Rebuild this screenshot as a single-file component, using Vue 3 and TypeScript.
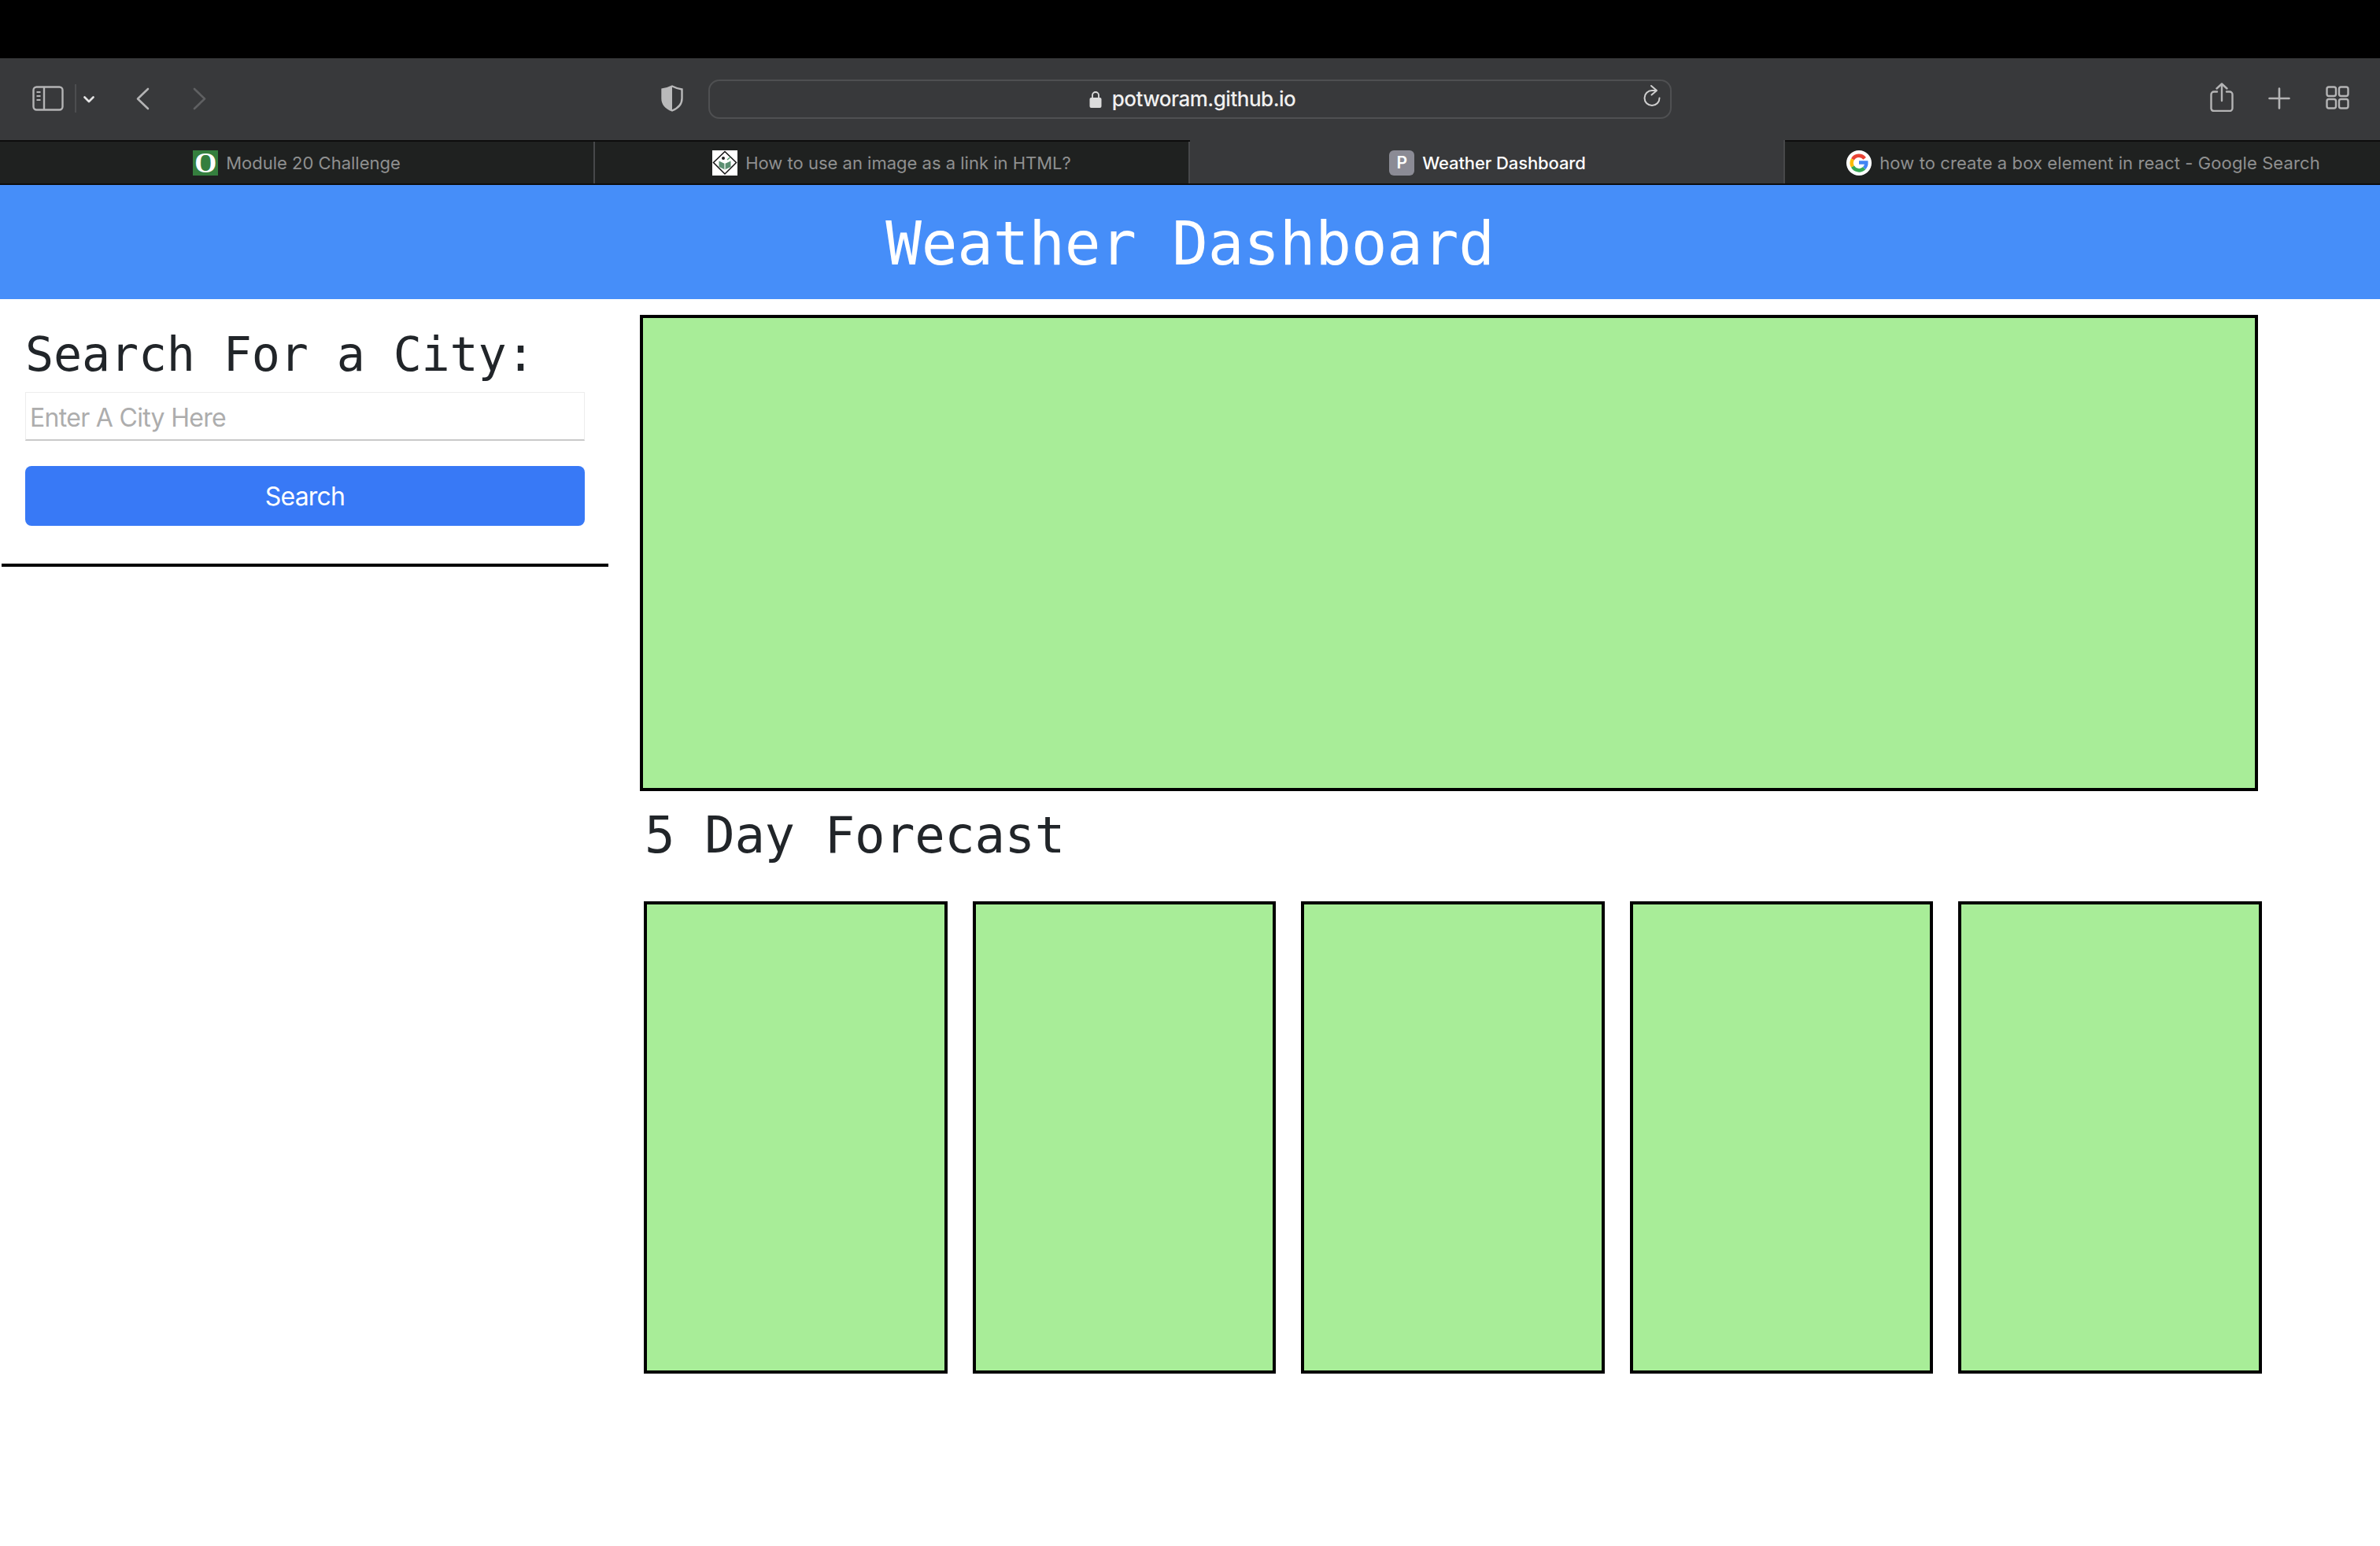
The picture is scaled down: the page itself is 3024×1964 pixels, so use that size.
<script setup lang="ts">
const forecastDays = [1, 2, 3, 4, 5]
</script>

<template>
  <div class="page">
    <div class="menu-strip"></div>

    <div class="toolbar">
      <svg class="ico-sidebar" width="40" height="32" viewBox="0 0 40 32" fill="none" stroke="#b4b4b5" stroke-width="2.4">
        <rect x="1.5" y="1.5" width="37" height="29" rx="4" />
        <path d="M15 2v28" />
        <path d="M5.5 8h5M5.5 13h5M5.5 18h5" stroke-width="2" />
      </svg>
      <span class="ico-sep"></span>
      <svg class="ico-chevron" width="14" height="9" viewBox="0 0 14 9" fill="none" stroke="#e4e4e4" stroke-width="2.6" stroke-linecap="round" stroke-linejoin="round">
        <path d="M1.5 1.5 7 7l5.5-5.5" />
      </svg>
      <svg class="ico-back" width="17" height="29" viewBox="0 0 17 29" fill="none" stroke="#b4b4b5" stroke-width="2.6" stroke-linecap="round" stroke-linejoin="round">
        <path d="M15 2 2 14.5 15 27" />
      </svg>
      <svg class="ico-forward" width="17" height="29" viewBox="0 0 17 29" fill="none" stroke="#5f6062" stroke-width="2.6" stroke-linecap="round" stroke-linejoin="round">
        <path d="M2 2l13 12.5L2 27" />
      </svg>
      <svg class="ico-shield" width="28" height="34" viewBox="0 0 28 34" fill="none">
        <path d="M14 1.500C18 3.500 22 5 26.500 5.500V17c0 7-5 12.500-12.500 15.500C6.500 29.500 1.500 24 1.500 17V5.500C6 5 10 3.500 14 1.500Z" stroke="#b9b9ba" stroke-width="2.400" />
        <path d="M14 1.500C10 3.500 6 5 1.500 5.500V17c0 7 5 12.500 12.500 15.500Z" fill="#b9b9ba" />
      </svg>

      <div class="url-bar">
        <span class="url-text-wrap">
          <svg width="16" height="22" viewBox="0 0 16 22" fill="none">
            <path d="M4 10V6a4 4 0 0 1 8 0v4" stroke="#dcdcdc" stroke-width="1.800" />
            <rect x="0.500" y="9" width="15" height="13" rx="2" fill="#dcdcdc" />
          </svg>
          <span class="url-text">potworam.github.io</span>
        </span>
        <svg class="ico-reload" width="24" height="28" viewBox="0 0 24 28" fill="none" stroke="#d0d0d0" stroke-width="2" stroke-linecap="round" stroke-linejoin="round">
          <path d="M17 8h-5a9.500 9.500 0 1 0 9.500 9.500" />
          <path d="M11 2l7 6-6.500 5.500" />
        </svg>
      </div>

      <svg class="ico-share" width="30" height="37" viewBox="0 0 30 37" fill="none" stroke="#b4b4b5" stroke-width="2.400" stroke-linecap="round" stroke-linejoin="round">
        <path d="M9 11.500H5A3.500 3.500 0 0 0 1.500 15v18A3.500 3.500 0 0 0 5 36h20a3.500 3.500 0 0 0 3.500-3.500V15a3.500 3.500 0 0 0-3.500-3.500h-4" />
        <path d="M15 23V2M8.500 7.500 15 1.500l6.500 6" />
      </svg>
      <svg class="ico-plus" width="28" height="28" viewBox="0 0 28 28" fill="none" stroke="#b4b4b5" stroke-width="2.600" stroke-linecap="round">
        <path d="M14 1.500v25M1.500 14h25" />
      </svg>
      <svg class="ico-grid" width="30" height="30" viewBox="0 0 30 30" fill="none" stroke="#b4b4b5" stroke-width="2.400">
        <rect x="1.500" y="1.500" width="11.500" height="11.500" rx="2.500" />
        <rect x="17" y="1.500" width="11.500" height="11.500" rx="2.500" />
        <rect x="1.500" y="17" width="11.500" height="11.500" rx="2.500" />
        <rect x="17" y="17" width="11.500" height="11.500" rx="2.500" />
      </svg>
    </div>

    <div class="tabs">
      <div class="tab">
        <span class="fav fav-o">O</span>
        <span class="tab-title">Module 20 Challenge</span>
      </div>
      <div class="tab">
        <svg class="fav" viewBox="0 0 32 32" fill="none">
          <rect width="32" height="32" fill="#fff" />
          <path d="M16 1.500 30.500 15.500 16 30 1.500 15.500Z" stroke="#111" stroke-width="1.500" />
          <path d="M8.500 13.500 16 17l7.500-3.500v7.500L16 24.500l-7.500-3.500Z" fill="#5c8f72" />
          <path d="M16 17v7.500" stroke="#fff" stroke-width="1.200" />
          <circle cx="14" cy="10" r="2" fill="#222" />
          <path d="M19 12l4-3.500" stroke="#4e9a68" stroke-width="1.200" />
        </svg>
        <span class="tab-title">How to use an image as a link in HTML?</span>
      </div>
      <div class="tab tab-active">
        <span class="fav fav-p">P</span>
        <span class="tab-title">Weather Dashboard</span>
      </div>
      <div class="tab tab-google">
        <svg class="fav" viewBox="0 0 32 32" fill="none">
          <circle cx="16" cy="16" r="16" fill="#fff" />
          <path d="M23.200 10.300A9.300 9.300 0 0 0 8 11.300" stroke="#e94335" stroke-width="4.500" />
          <path d="M8 11.300a9.300 9.300 0 0 0 0 9.400" stroke="#fbbc05" stroke-width="4.500" />
          <path d="M8 20.700a9.300 9.300 0 0 0 14.700 1.900" stroke="#34a853" stroke-width="4.500" />
          <path d="M22.700 22.600A9.300 9.300 0 0 0 25.300 15.500H16" stroke="#4285f4" stroke-width="4.500" />
        </svg>
        <span class="tab-title">how to create a box element in react - Google Search</span>
      </div>
    </div>

    <header class="site-header">
      <h1>Weather Dashboard</h1>
    </header>

    <div class="content">
      <aside class="sidebar">
        <div class="search-box">
          <h2>Search For a City:</h2>
          <input class="city-input" type="text" placeholder="Enter A City Here" />
          <button class="search-btn" type="button">Search</button>
        </div>
        <hr class="divider" />
      </aside>

      <main class="main">
        <section class="today"></section>
        <h3 class="forecast-title">5 Day Forecast</h3>
        <div class="forecast">
          <div v-for="day in forecastDays" :key="day" class="day-card"></div>
        </div>
      </main>
    </div>
  </div>
</template>

<style scoped>
.page {
  width: 3024px;
  height: 1964px;
  background: #fff;
  overflow: hidden;
  font-family: Inter, "Liberation Sans", sans-serif;
}

.menu-strip {
  height: 74px;
  background: #000;
}

.toolbar {
  height: 104px;
  background: #38393b;
  display: flex;
  align-items: center;
  padding-left: 41px;
  padding-bottom: 2px;
  box-sizing: border-box;
}

.ico-sep {
  width: 2px;
  height: 36px;
  margin-left: 14px;
  background: #4c4d4f;
}

.ico-chevron {
  margin-left: 9px;
  margin-top: 2px;
}

.ico-back {
  margin-left: 53px;
}

.ico-forward {
  margin-left: 55px;
}

.ico-shield {
  margin-left: 578px;
}

.url-bar {
  width: 1224px;
  height: 50px;
  margin-left: 32px;
  margin-top: 2px;
  box-sizing: border-box;
  border: 2px solid #4f5052;
  border-radius: 14px;
  display: flex;
  align-items: center;
  justify-content: center;
  padding-left: 6px;
  position: relative;
}

.url-text-wrap {
  display: flex;
  align-items: center;
  gap: 13px;
}

.url-text {
  color: #f0f0f0;
  font-size: 26px;
  font-weight: 500;
  line-height: 1;
  letter-spacing: -0.5px;
}

.ico-reload {
  position: absolute;
  right: 11px;
  top: 4px;
}

.ico-share {
  margin-left: 684px;
  margin-bottom: 4px;
}

.ico-plus {
  margin-left: 44px;
  margin-bottom: 1px;
}

.ico-grid {
  margin-left: 45px;
  margin-bottom: 2px;
}

.tabs {
  height: 57px;
  display: grid;
  grid-template-columns: repeat(4, 1fr);
  background: #1f2120;
  border-top: 2px solid #0d0d0d;
  border-bottom: 2px solid #0d0d0d;
  box-sizing: border-box;
}

.tab {
  display: flex;
  align-items: center;
  justify-content: center;
  gap: 10px;
  border-right: 2px solid #47484a;
  color: #8f9090;
  font-size: 22px;
}

.tab:last-child {
  border-right: 0;
}

.tab-active {
  margin-top: -2px;
  padding: 2px 0 0 2px;
  background: #38393b;
  color: #fff;
  font-weight: 500;
  letter-spacing: -0.1px;
}

.tab-google {
  padding-left: 2px;
  letter-spacing: 0.1px;
}

.fav {
  width: 32px;
  height: 32px;
  flex: 0 0 auto;
}

.fav-o {
  background: #357f3e;
  color: #fff;
  font-family: "Liberation Serif", serif;
  font-weight: 700;
  font-size: 36px;
  line-height: 32px;
  text-align: center;
}

.fav-p {
  background: #8b8b95;
  color: #fff;
  border-radius: 6px;
  font-size: 21px;
  font-weight: 600;
  line-height: 32px;
  text-align: center;
}

.site-header {
  height: 145px;
  padding-top: 4px;
  box-sizing: border-box;
  background: #468ef9;
  display: flex;
  align-items: center;
  justify-content: center;
}

.site-header h1 {
  margin: 0;
  color: #fff;
  font-family: "DejaVu Sans Mono", monospace;
  font-size: 76px;
  font-weight: 400;
  line-height: 1.2;
  letter-spacing: -0.25px;
}

.content {
  display: flex;
}

.sidebar {
  width: 776px;
  flex: 0 0 auto;
}

.search-box {
  padding: 34px 33px 0 32px;
}

.search-box h2 {
  margin: 0;
  color: #212529;
  font-family: "DejaVu Sans Mono", monospace;
  font-size: 60px;
  font-weight: 400;
  line-height: 72px;
  letter-spacing: -0.15px;
}

.city-input {
  display: block;
  width: 100%;
  height: 62px;
  margin-top: 12px;
  padding: 4px 5px 0;
  box-sizing: border-box;
  background: #fff;
  border: 1px solid #ededed;
  border-bottom: 2px solid #c9c9c9;
  border-radius: 0;
  outline: none;
  font-family: inherit;
  font-size: 32px;
  letter-spacing: -0.7px;
}

.city-input::placeholder {
  color: #adadad;
  opacity: 1;
}

.search-btn {
  display: block;
  width: 100%;
  height: 76px;
  margin-top: 32px;
  background: #3879f6;
  border: 0;
  border-radius: 8px;
  color: #fff;
  font-family: inherit;
  font-size: 32px;
  letter-spacing: -0.8px;
}

.divider {
  height: 4px;
  margin: 48px 3px 0 2px;
  border: 0;
  background: #000;
}

.main {
  flex: 0 0 auto;
  width: 2062px;
  margin-left: 37px;
  padding-top: 20px;
}

.today {
  width: 2056px;
  height: 605px;
  box-sizing: border-box;
  background: #a8ed98;
  border: 4px solid #000;
}

.forecast-title {
  margin: 18px 0 0 6px;
  color: #212529;
  font-family: "DejaVu Sans Mono", monospace;
  font-size: 64px;
  font-weight: 400;
  line-height: 77px;
  letter-spacing: -0.4px;
}

.forecast {
  display: grid;
  grid-template-columns: repeat(5, 1fr);
  gap: 32px;
  width: 2056px;
  margin: 45px 0 0 5px;
}

.day-card {
  height: 600px;
  box-sizing: border-box;
  background: #a8ed98;
  border: 4px solid #000;
}
</style>

<style>
html,
body {
  margin: 0;
  background: #fff;
}
</style>
